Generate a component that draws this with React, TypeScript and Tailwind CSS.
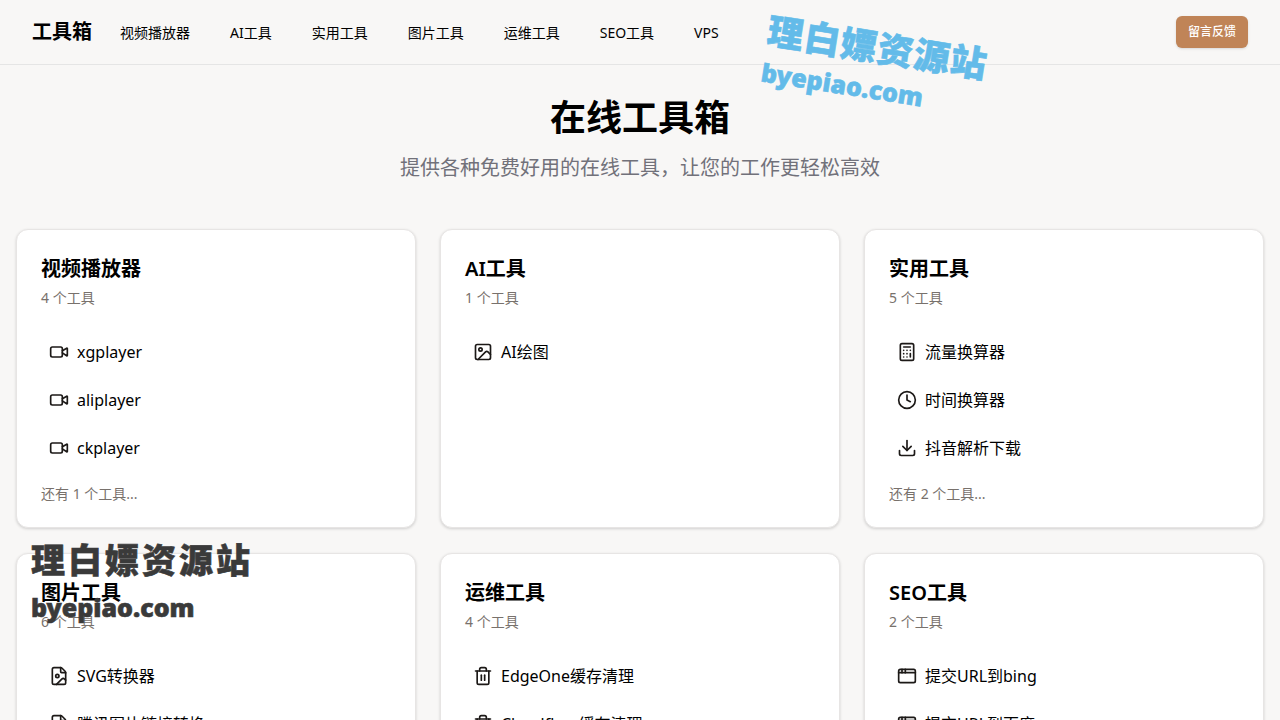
import { Video, Image, Calculator, Clock, Download, FileImage, Trash2, AppWindow } from "lucide-react";

type Item = { icon: typeof Video; label: string };
type Cat = { title: string; count: number; items: Item[]; more?: number };

const cats: Cat[] = [
  { title: "视频播放器", count: 4, more: 1, items: [
    { icon: Video, label: "xgplayer" }, { icon: Video, label: "aliplayer" }, { icon: Video, label: "ckplayer" } ] },
  { title: "AI工具", count: 1, items: [{ icon: Image, label: "AI绘图" }] },
  { title: "实用工具", count: 5, more: 2, items: [
    { icon: Calculator, label: "流量换算器" }, { icon: Clock, label: "时间换算器" }, { icon: Download, label: "抖音解析下载" } ] },
  { title: "图片工具", count: 6, items: [
    { icon: FileImage, label: "SVG转换器" }, { icon: FileImage, label: "腾讯图片链接转换" } ] },
  { title: "运维工具", count: 4, items: [
    { icon: Trash2, label: "EdgeOne缓存清理" }, { icon: Trash2, label: "Cloudflare缓存清理" } ] },
  { title: "SEO工具", count: 2, items: [
    { icon: AppWindow, label: "提交URL到bing" }, { icon: AppWindow, label: "提交URL到百度" } ] },
];

const nav = ["视频播放器", "AI工具", "实用工具", "图片工具", "运维工具", "SEO工具", "VPS"];

export default function App() {
  return (
    <div className="relative h-screen overflow-hidden bg-[#f8f7f6] text-black font-['Noto_Sans','Noto_Sans_CJK_SC',sans-serif]">
      <header className="h-[65px] border-b border-[#e5e5e5] px-8 flex items-center justify-between">
        <div className="flex items-center">
          <span className="text-xl font-bold w-[88px]">工具箱</span>
          <nav className="mt-0.5 flex gap-10 text-sm">
            {nav.map((n) => <a key={n}>{n}</a>)}
          </nav>
        </div>
        <button className="w-[72px] h-8 rounded-md bg-[#c08457] text-white text-xs font-medium shadow-sm">留言反馈</button>
      </header>

      <section className="pt-[29px] text-center">
        <h1 className="text-4xl font-bold leading-[48px]">在线工具箱</h1>
        <p className="mt-3 text-xl leading-7 text-[#71717a]">提供各种免费好用的在线工具，让您的工作更轻松高效</p>
      </section>

      <main className="mt-[47px] px-4 grid grid-cols-3 gap-x-6 gap-y-[25px]">
        {cats.map((c) => (
          <div key={c.title} className="h-[299px] rounded-xl bg-white border border-[#e7e5e4] shadow-[0_1px_3px_rgba(0,0,0,0.16)] px-6 pt-[25px]">
            <h2 className="text-xl font-semibold leading-7">{c.title}</h2>
            <p className="mt-[5px] text-sm leading-5 text-[#78716c]">{c.count} 个工具</p>
            <ul className="mt-5">
              {c.items.map((it) => (
                <li key={it.label} className="h-12 flex items-center gap-2 px-2 text-base">
                  <it.icon className="w-5 h-5 text-[#1c1917]" strokeWidth={2} />
                  <span>{it.label}</span>
                </li>
              ))}
            </ul>
            {c.more && <p className="mt-3 text-sm leading-5 text-[#78716c]">还有 {c.more} 个工具...</p>}
          </div>
        ))}
      </main>

      <div className="absolute left-[771px] top-[11px] rotate-[9deg] origin-top-left text-[#63bbe9] font-black select-none [-webkit-text-stroke:0.6px_#63bbe9]">
        <div className="text-[36px] leading-[40px] tracking-[1px] whitespace-nowrap">理白嫖资源站</div>
        <div className="mt-[4px] text-[25px] leading-[34px] whitespace-nowrap">byepiao.com</div>
      </div>
      <div className="absolute left-[31px] top-[538px] text-[#3a3a3a] font-black select-none [-webkit-text-stroke:0.6px_#3a3a3a]">
        <div className="text-[34px] leading-[44px] tracking-[3px] whitespace-nowrap">理白嫖资源站</div>
        <div className="mt-[8px] text-[25px] leading-[34px] whitespace-nowrap">byepiao.com</div>
      </div>
    </div>
  );
}
